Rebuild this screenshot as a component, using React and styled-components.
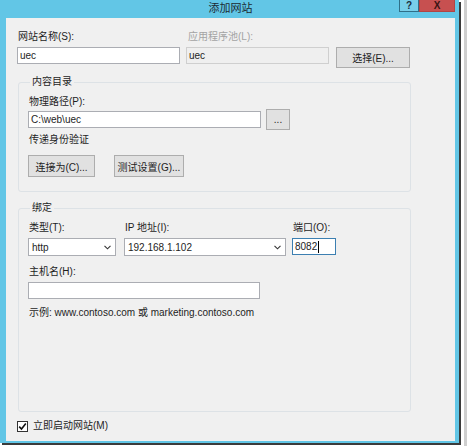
import React from 'react'
import styled, { createGlobalStyle } from 'styled-components';

const GlobalStyle = createGlobalStyle`
    html, body{
        margin: 0;
        padding: 0;
        background-color: #ffffff;
    }
    body{
        font-family: "Liberation Sans", "Noto Sans CJK SC", sans-serif;
        font-size: 10px;
        color: #1e1e1e;
    }
`;

const Page = styled.div`
    width: 467px;
    height: 446px;
    display: flex;
    background: linear-gradient(to right, #ffffff 0, #ffffff 464px, #cfcfcf 464px);
`;

const Window = styled.div`
    width: 459px;
    height: 443px;
    box-sizing: border-box;
    background-color: #62c6e6;
    box-shadow: 2px 2px 0 #3b3b3b;
    padding: 0 4px 2px 6px;
    display: flex;
    flex-direction: column;
`;

const TitleBar = styled.div`
    height: 18px;
    display: grid;
    grid-template-columns: 1fr auto 1fr;
    align-items: start;
    margin-left: -6px;
`;

const Title = styled.div`
    grid-column: 2;
    font-family: "Noto Sans CJK SC", sans-serif;
    font-size: 11px;
    line-height: 14px;
    color: #1c2a33;
    padding-left: 6px;
`;

const Caption = styled.div`
    grid-column: 3;
    justify-self: end;
    display: flex;
`;

const CaptionButton = styled.div`
    height: 12px;
    width: ${p => p.$w}px;
    box-sizing: border-box;
    background-color: ${p => p.$close ? '#c75050' : '#78cfea'};
    border: 1px solid ${p => p.$close ? '#b04545' : '#2f6f88'};
    border-top: none;
    display: flex;
    align-items: center;
    justify-content: center;
    font-family: "Liberation Sans", sans-serif;
    font-weight: 700;
    font-size: 10px;
    line-height: 10px;
    color: ${p => p.$close ? '#3a1414' : '#1a2c3a'};
`;

const Body = styled.div`
    flex: 1;
    background-color: #f0f0f0;
    padding: 12px 0 0 11px;
    display: flex;
    flex-direction: column;
`;

const TopRow = styled.div`
    display: grid;
    grid-template-columns: 163px 143px 74px;
    column-gap: 6px;
    align-items: end;
    & > :nth-child(3){ margin-left: 1px; }
`;

const Field = styled.div`
    display: flex;
    flex-direction: column;
    gap: 3px;
    width: ${p => p.$w ? `${p.$w}px` : 'auto'};
`;

const Label = styled.div`
    font-family: "Liberation Sans", "Noto Sans CJK SC", sans-serif;
    font-size: 10px;
    line-height: 14px;
    color: ${p => p.$disabled ? '#a3a3a3' : '#1e1e1e'};
    padding-left: ${p => p.$pad ?? 1}px;
    white-space: nowrap;
`;

const Input = styled.div`
    height: 17px;
    width: ${p => p.$w ? `${p.$w}px` : '100%'};
    box-sizing: border-box;
    background-color: ${p => p.$disabled ? '#efefef' : '#ffffff'};
    border: 1px solid ${p => p.$focus ? '#3c7fb1' : p.$disabled ? '#cfcfcf' : '#abadb3'};
    padding: 0 2px;
    display: flex;
    align-items: center;
    font-size: 10px;
    color: #1e1e1e;
`;

const Caret = styled.span`
    display: inline-block;
    width: 1px;
    height: 12px;
    background-color: #000;
    margin-left: 1px;
`;

const Select = styled(Input)`
    height: 18px;
    justify-content: space-between;
    padding: 0 4px 0 3px;
`;

const Button = styled.div`
    width: ${p => p.$w}px;
    height: ${p => p.$h ?? 21}px;
    box-sizing: border-box;
    background-color: #e1e1e1;
    border: 1px solid #adadad;
    display: flex;
    align-items: center;
    justify-content: center;
    font-size: 10px;
    color: #1e1e1e;
`;

const Group = styled.fieldset`
    width: 393px;
    box-sizing: border-box;
    margin: ${p => p.$mt}px 0 0 1px;
    border: 1px solid #dde2e6;
    border-radius: 3px;
    padding: 2px 0 0 9px;
    min-inline-size: 0;
    display: flex;
    flex-direction: column;
    height: ${p => p.$h}px;
`;

const Legend = styled.legend`
    padding: 0 2px;
    margin-left: 2px;
    font-size: 10px;
    line-height: 14px;
    color: #1e1e1e;
`;

const PathRow = styled.div`
    display: flex;
    align-items: center;
    gap: 5px;
    margin-top: 0;
`;

const ButtonRow = styled.div`
    display: flex;
    gap: 19px;
    margin-top: 8px;
`;

const Plain = styled.div`
    font-size: 10px;
    line-height: 14px;
    margin-top: ${p => p.$mt ?? 0}px;
    padding-left: 1px;
    white-space: nowrap;
`;

const BindRow = styled.div`
    display: flex;
    gap: 8px;
    margin-top: 4px;
    & > :nth-child(3){ margin-left: -2px; }
`;

const CheckRow = styled.div`
    display: flex;
    align-items: center;
    gap: 5px;
    margin-top: 7px;
`;

const CheckBox = styled.div`
    width: 11px;
    height: 11px;
    box-sizing: border-box;
    border: 1px solid #333;
    background-color: #fff;
    display: flex;
    align-items: center;
    justify-content: center;
`;

function Chevron() {
    return (
        <svg width="7" height="5" viewBox="0 0 7 5">
            <path d="M0.5 0.8 L3.5 3.8 L6.5 0.8" fill="none" stroke="#333" strokeWidth="1.1" />
        </svg>
    )
}

function App() {
    return (
        <Page>
            <GlobalStyle />
            <Window>
                <TitleBar>
                    <Title>添加网站</Title>
                    <Caption>
                        <CaptionButton $w={20}>?</CaptionButton>
                        <CaptionButton $w={36} $close>X</CaptionButton>
                    </Caption>
                </TitleBar>
                <Body>
                    <TopRow>
                        <Field>
                            <Label>网站名称(S):</Label>
                            <Input>uec</Input>
                        </Field>
                        <Field>
                            <Label $disabled $pad={2}>应用程序池(L):</Label>
                            <Input $disabled>uec</Input>
                        </Field>
                        <Button $w={74} $h={21} style={{ marginBottom: -4 }}>选择(E)...</Button>
                    </TopRow>

                    <Group $mt={11} $h={117}>
                        <Legend>内容目录</Legend>
                        <Plain $mt={4}>物理路径(P):</Plain>
                        <PathRow>
                            <Input $w={233}>C:\web\uec</Input>
                            <Button $w={24} $h={21}>...</Button>
                        </PathRow>
                        <Plain $mt={3}>传递身份验证</Plain>
                        <ButtonRow>
                            <Button $w={67} $h={22}>连接为(C)...</Button>
                            <Button $w={70} $h={22}>测试设置(G)...</Button>
                        </ButtonRow>
                    </Group>

                    <Group $mt={9} $h={211}>
                        <Legend>绑定</Legend>
                        <BindRow>
                            <Field $w={88}>
                                <Label>类型(T):</Label>
                                <Select>http<Chevron /></Select>
                            </Field>
                            <Field $w={162}>
                                <Label>IP 地址(I):</Label>
                                <Select>192.168.1.102<Chevron /></Select>
                            </Field>
                            <Field $w={44}>
                                <Label>端口(O):</Label>
                                <Input $focus>8082<Caret /></Input>
                            </Field>
                        </BindRow>
                        <Field $w={232} style={{ marginTop: 9 }}>
                            <Label>主机名(H):</Label>
                            <Input>&nbsp;</Input>
                        </Field>
                        <Plain $mt={7}>示例: www.contoso.com 或 marketing.contoso.com</Plain>
                    </Group>

                    <CheckRow>
                        <CheckBox>
                            <svg width="9" height="9" viewBox="0 0 9 9">
                                <path d="M1.2 4.6 L3.5 7 L7.8 1.6" fill="none" stroke="#111" strokeWidth="1.6" />
                            </svg>
                        </CheckBox>
                        <Label $pad={0}>立即启动网站(M)</Label>
                    </CheckRow>
                </Body>
            </Window>
        </Page>
    )
}

export default App;
